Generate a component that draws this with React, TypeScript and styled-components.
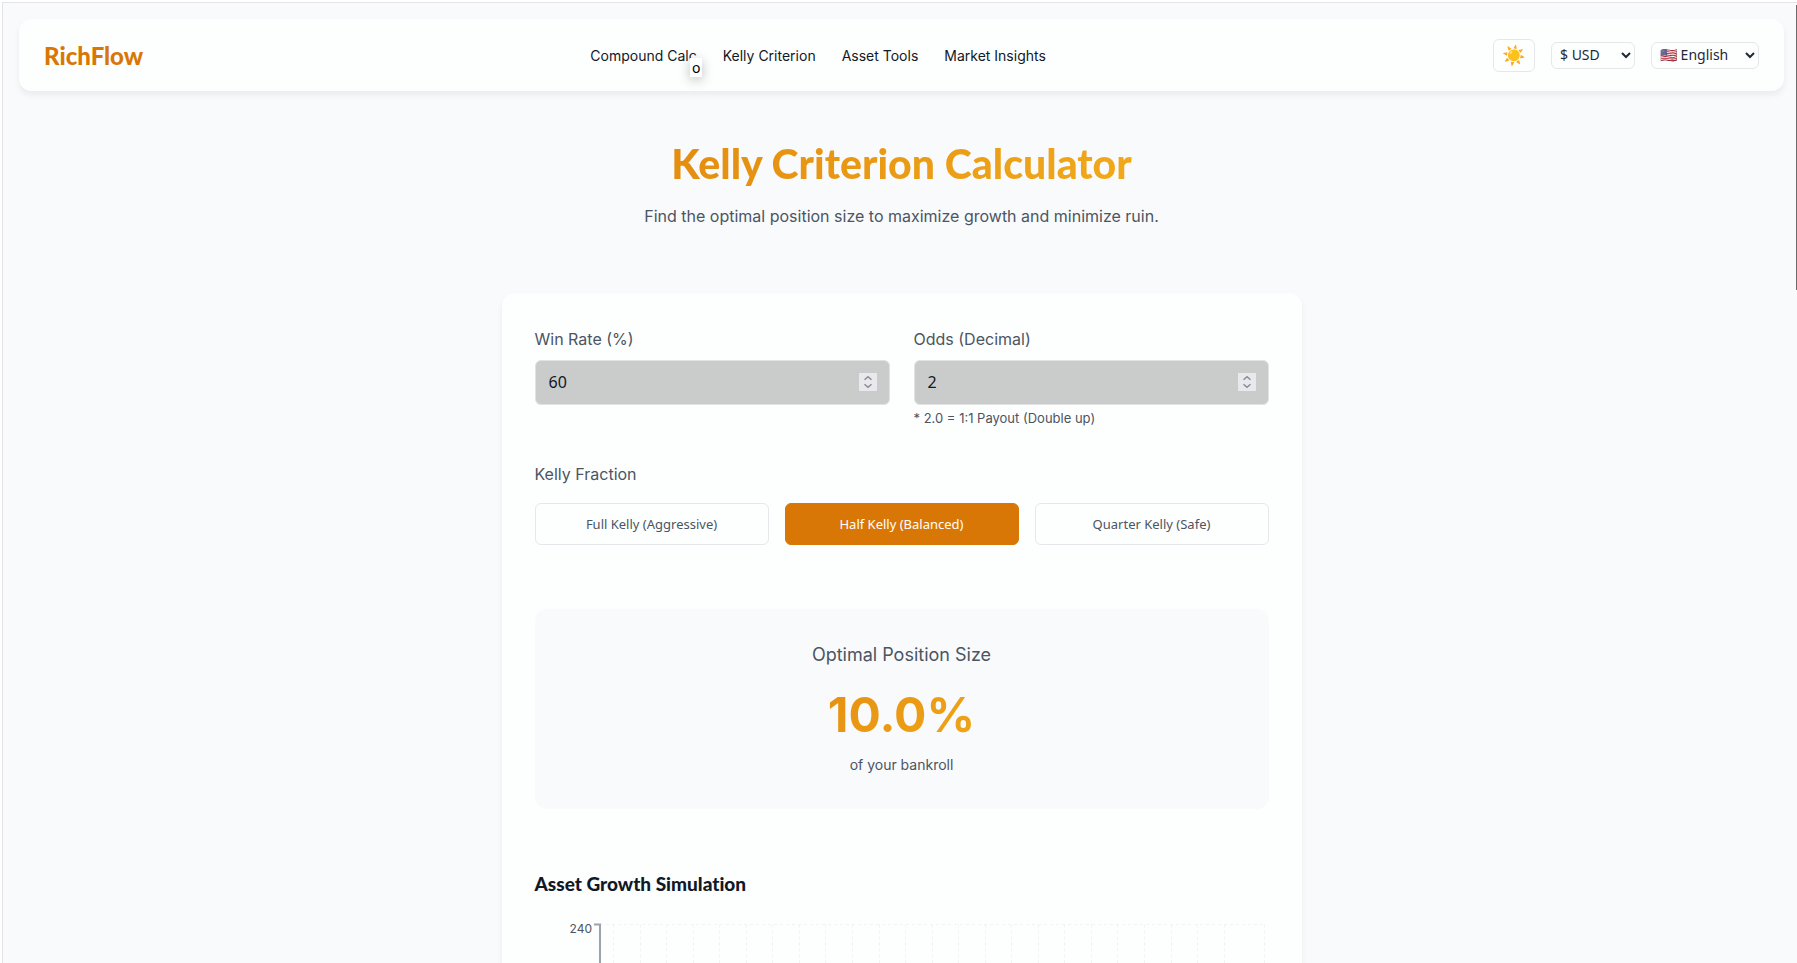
import React, { useState } from "react";
import styled, { createGlobalStyle } from "styled-components";

const display = `Lato, "Liberation Sans", sans-serif`;
const body = `Inter, "Liberation Sans", sans-serif`;
const control = `"Noto Sans", "Open Sans", sans-serif`;
const gold = "linear-gradient(135deg, #d97706 0%, #fbbf24 100%)";

const GlobalStyle = createGlobalStyle`
  *, *::before, *::after { box-sizing: border-box; }
  body { margin: 0; background: #fff; font-family: ${body}; color: #111827; overflow: hidden; }
  h1, h2, h3, p { margin: 0; }
`;

const Shell = styled.div`
  height: 100vh;
  padding: 2px 0 0 2px;
  overflow: hidden;
`;

const Page = styled.div`
  height: 100%;
  margin-right: -3px;
  padding: 16px;
  border: solid #e4e4e6;
  border-width: 1px 0 0 1px;
  background: #f9fafc;
  overflow: hidden auto;
  scrollbar-width: none;
`;

const ScrollThumb = styled.div`
  position: fixed;
  top: 5px;
  right: 0;
  width: 1px;
  height: calc(30vh - 4px);
  background: #6b6b6b;
`;

const Nav = styled.nav`
  display: flex;
  align-items: center;
  justify-content: space-between;
  height: 72px;
  padding: 0 24px;
  border: 1px solid #fdfefe;
  border-radius: 12px;
  background: #fdfefe;
  box-shadow: 0 4px 6px rgba(0, 0, 0, 0.06);
`;

const Logo = styled.a`
  padding-top: 2px;
  font: 900 24px/32px ${display};
  color: #d97706;
  text-decoration: none;
`;

const Links = styled.div`
  display: flex;
  gap: 26px;
`;

const NavLink = styled.a`
  position: relative;
  padding-top: 2px;
  font-size: 14px;
  line-height: 24px;
  color: #111827;
  text-decoration: none;
`;

const Hint = styled.span`
  position: absolute;
  left: 100px;
  top: 16px;
  width: 12px;
  font: 14px/19px ${control};
  text-align: center;
  color: #000;
  background: #fff;
  box-shadow: 0 3px 12px rgba(0, 0, 0, 0.25);
`;

const Tools = styled.div`
  display: flex;
  align-items: center;
  gap: 16px;
`;

const ThemeButton = styled.button`
  display: grid;
  place-items: center;
  width: 42px;
  height: 33px;
  padding: 0;
  border: 1px solid #e5e7eb;
  border-radius: 6px;
  background: transparent;
  font: 19px/24px ${control};
`;

const Select = styled.select<{ $width: number }>`
  width: ${(p) => p.$width}px;
  height: 27px;
  padding: 0 5px 2px 4px;
  border: 1px solid #e5e7eb;
  border-radius: 6px;
  background: transparent;
  font: 14px ${control};
  color: #1f2937;
`;

const Header = styled.header`
  max-width: 1200px;
  margin: 48px auto 66px;
  text-align: center;
`;

const Title = styled.h1`
  margin-bottom: 16px;
  font: 900 41px/50px ${display};
  color: transparent;
  background: ${gold};
  background-clip: text;
`;

const Subtitle = styled.p`
  font-size: 16px;
  line-height: 22px;
  color: #4b5563;
`;

const Card = styled.main`
  max-width: 800px;
  margin: 0 auto;
  padding: 32px;
  border: 1px solid #fdfefe;
  border-radius: 12px;
  background: #fdfefe;
  box-shadow: 0 4px 6px rgba(0, 0, 0, 0.06);
`;

const Columns = styled.div`
  display: grid;
  grid-template-columns: 1fr 1fr;
  gap: 24px;
`;

const Field = styled.div`
  display: flex;
  flex-direction: column;
  gap: 8px;
`;

const labelText = `
  font-size: 16px;
  line-height: 26px;
  color: #4b5563;
`;

const Label = styled.label`
  ${labelText}
`;

const InputBox = styled.div`
  position: relative;
  display: flex;
`;

const NumberInput = styled.input`
  width: 100%;
  height: 45px;
  padding: 0 12px 2px 13px;
  border: 1px solid #e0e2e4;
  border-radius: 6px;
  background: #cacbcb;
  font: 16px ${control};
  color: #111827;
  appearance: textfield;

  &::-webkit-inner-spin-button {
    display: none;
  }
`;

const Stepper = styled.svg`
  position: absolute;
  right: 13px;
  top: 13px;
  width: 18px;
  height: 18px;
  background: #e9e8ed;
  pointer-events: none;
`;

const Help = styled.p`
  margin-top: -4px;
  font-size: 13px;
  line-height: 18px;
  padding-bottom: 2px;
  color: #4b5563;
`;

const Fractions = styled.fieldset`
  margin: 32px 0 64px;
  padding: 0;
  border: 0;
`;

const Legend = styled.legend`
  ${labelText}
  padding: 0;
  margin-bottom: 16px;
`;

const FractionRow = styled.div`
  display: grid;
  grid-template-columns: repeat(3, 1fr);
  gap: 16px;
`;

const FractionButton = styled.button<{ $active: boolean }>`
  height: 42px;
  border: 1px solid ${(p) => (p.$active ? "#d97706" : "#e5e7eb")};
  border-radius: 6px;
  background: ${(p) => (p.$active ? "#d97706" : "transparent")};
  color: ${(p) => (p.$active ? "#fff" : "#4b5563")};
  font: 13px ${control};
`;

const Result = styled.section`
  margin-bottom: 64px;
  padding: 32px;
  border-radius: 12px;
  background: #f9fafc;
  text-align: center;
`;

const ResultTitle = styled.p`
  font-size: 18px;
  line-height: 28px;
  color: #4b5563;
`;

const ResultValue = styled.p`
  margin: 12px 0 4px;
  font-size: 48px;
  font-weight: 700;
  line-height: 68px;
  color: transparent;
  background: ${gold};
  background-clip: text;
`;

const ResultNote = styled.p`
  font-size: 14px;
  line-height: 24px;
  color: #4b5563;
`;

const ChartTitle = styled.h2`
  margin-bottom: 24px;
  font: 900 19px/22px ${display};
  font-variant-ligatures: none;
  color: #111827;
`;

const Chart = styled.svg`
  display: block;
  width: 100%;
  height: 300px;
  font: 12px ${body};
`;

const StepperArrows = () => (
  <Stepper viewBox="0 0 18 18" fill="none" stroke="#8c8b94" strokeWidth="1.5" aria-hidden="true">
    <path d="M5.5 6.8 9 3.7l3.5 3.1M5.5 11.2 9 14.3l3.5-3.1" />
  </Stepper>
);

const fractions = ["Full Kelly (Aggressive)", "Half Kelly (Balanced)", "Quarter Kelly (Safe)"];
const gridLines = [...Array.from({ length: 24 }, (_, i) => 78 + i * 26.55), 729];

export default function App() {
  const [active, setActive] = useState(1);
  return (
    <>
      <GlobalStyle />
      <Shell>
        <Page>
          <Nav>
            <Logo href="#">RichFlow</Logo>
            <Links>
              <NavLink href="#compound">
                Compound Calc
                <Hint>o</Hint>
              </NavLink>
              <NavLink href="#kelly">Kelly Criterion</NavLink>
              <NavLink href="#assets">Asset Tools</NavLink>
              <NavLink href="#market">Market Insights</NavLink>
            </Links>
            <Tools>
              <ThemeButton type="button" aria-label="Toggle theme">☀️</ThemeButton>
              <Select $width={84} aria-label="Currency">
                <option>$ USD</option>
              </Select>
              <Select $width={108} aria-label="Language">
                <option>🇺🇸 English</option>
              </Select>
            </Tools>
          </Nav>
          <Header>
            <Title>Kelly Criterion Calculator</Title>
            <Subtitle>Find the optimal position size to maximize growth and minimize ruin.</Subtitle>
          </Header>
          <Card>
            <Columns>
              <Field>
                <Label htmlFor="win-rate">Win Rate (%)</Label>
                <InputBox>
                  <NumberInput id="win-rate" type="number" defaultValue={60} />
                  <StepperArrows />
                </InputBox>
              </Field>
              <Field>
                <Label htmlFor="odds">Odds (Decimal)</Label>
                <InputBox>
                  <NumberInput id="odds" type="number" defaultValue={2} />
                  <StepperArrows />
                </InputBox>
                <Help>* 2.0 = 1:1 Payout (Double up)</Help>
              </Field>
            </Columns>
            <Fractions>
              <Legend>Kelly Fraction</Legend>
              <FractionRow>
                {fractions.map((name, i) => (
                  <FractionButton key={name} type="button" $active={i === active} onClick={() => setActive(i)}>
                    {name}
                  </FractionButton>
                ))}
              </FractionRow>
            </Fractions>
            <Result>
              <ResultTitle>Optimal Position Size</ResultTitle>
              <ResultValue>10.0%</ResultValue>
              <ResultNote>of your bankroll</ResultNote>
            </Result>
            <ChartTitle>Asset Growth Simulation</ChartTitle>
            <Chart role="img" aria-label="Asset growth chart">
              <g stroke="#f1f2f4" strokeDasharray="3 3">
                <path d="M65 5.5H729" />
                {gridLines.map((x) => (
                  <path key={x} d={`M${Math.round(x) + 0.5} 5.5V270`} />
                ))}
              </g>
              <path d="M59 5.5h6V270" fill="none" stroke="#9ca3af" strokeWidth="2" />
              <text x="57" y="14" textAnchor="end" fill="#4b5563">
                240
              </text>
            </Chart>
          </Card>
        </Page>
        <ScrollThumb />
      </Shell>
    </>
  );
}
